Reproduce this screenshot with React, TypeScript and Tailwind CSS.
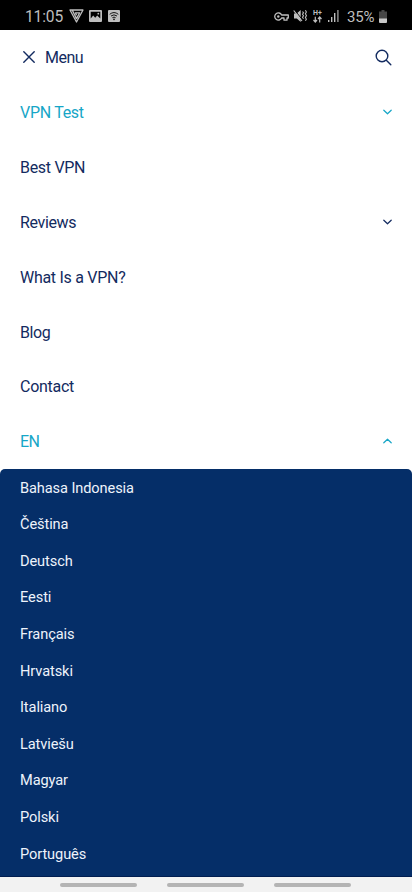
import React from "react";

const menu = [
  { label: "VPN Test", arrow: "down", active: true, tracking: "tracking-[-0.3px]" },
  { label: "Best VPN", tracking: "tracking-[-0.3px]" },
  { label: "Reviews", arrow: "down", tracking: "tracking-[-0.35px]" },
  { label: "What Is a VPN?", tracking: "tracking-[-0.28px]" },
  { label: "Blog", tracking: "tracking-[-0.4px]" },
  { label: "Contact", tracking: "tracking-[-0.28px]" },
  { label: "EN", arrow: "up", active: true, tracking: "tracking-[-0.5px]" },
];

const languages = [
  "Bahasa Indonesia", "Čeština", "Deutsch", "Eesti", "Français", "Hrvatski",
  "Italiano", "Latviešu", "Magyar", "Polski", "Português",
];

function Chevron({ up }: { up: boolean }) {
  return (
    <svg width="9" height="6" viewBox="0 0 9 6" fill="none" stroke="currentColor" strokeWidth="1.2" strokeLinecap="round" strokeLinejoin="round">
      <path d={up ? "M.8 4.8 4.5 1.2l3.7 3.6" : "M.8 1.2l3.7 3.6 3.7-3.6"} />
    </svg>
  );
}

function StatusBar() {
  return (
    <header className="flex h-[30px] shrink-0 items-center bg-black pt-[2px] text-[#bebebe]">
      <span className="ml-[25px] w-[38px] pt-px text-[15.6px] leading-5 tracking-[-0.15px] whitespace-nowrap">11:05</span>
      <svg className="ml-[6px] mb-px" width="15" height="14" viewBox="0 0 15 14" fill="none" stroke="currentColor" strokeWidth="1.3" strokeLinejoin="round">
        <path d="M3.2 1H1l6.5 12L14 1H3.2l4.3 8.6 3.2-5.8H6.4l1.2 2.5" />
      </svg>
      <svg className="ml-[5px]" width="13" height="12" viewBox="0 0 13 12">
        <path fill="currentColor" fillRule="evenodd" d="M1 0h11q1 0 1 1v10q0 1-1 1H1q-1 0-1-1V1q0-1 1-1Zm.7 1.7v6.8l2.5-3 2 2.3 2-2.2 3.1 3V1.7H1.7Z" />
        <circle cx="9.3" cy="3.7" r=".9" fill="currentColor" />
      </svg>
      <svg className="ml-[6px]" width="12" height="12" viewBox="0 0 12 12">
        <rect width="12" height="12" rx="1" fill="currentColor" />
        <g fill="none" stroke="#151515" strokeWidth="1">
          <path d="M1.7 4.3Q6 .8 10.3 4.3M3 6q3-2.3 6 0M4.4 7.7q1.6-1.2 3.2 0" />
        </g>
        <circle cx="6" cy="9.3" r=".9" fill="#151515" />
      </svg>

      <svg className="ml-auto" width="15" height="9" viewBox="0 0 15 9" fill="none" stroke="currentColor" strokeWidth="1.3" strokeLinejoin="round">
        <path d="M7.6 3A3.6 3.6 0 1 0 7.6 6H10v2.2h3V6h1.3V3Z" />
        <circle cx="4.3" cy="4.5" r="1.2" fill="currentColor" stroke="none" />
      </svg>
      <svg className="ml-[4px]" width="14" height="14" viewBox="0 0 14 14" fill="none" stroke="currentColor">
        <path fill="currentColor" stroke="none" d="M1 4.5h2.7L7.7 1v12L3.8 9.4H1z" />
        <path d="M1.5 1 10 11.5" stroke="#000" strokeWidth="1" />
        <path d="M.7 1.5 9 12" strokeWidth="1.2" />
        <path d="m9.5 2.5 1 1.3-1 1.5 1 1.5-1 1.5 1 1.5M12.4 1.3l1 1.7-1 1.8 1 1.8-1 1.8 1 1.8-1 1.6" strokeWidth="1.1" />
      </svg>
      <div className="ml-[6px] flex w-[9px] flex-col items-center">
        <span className="h-[6px] text-[7px] leading-[6px] font-bold whitespace-nowrap">H+</span>
        <svg width="9" height="7" viewBox="0 0 9 7" fill="none" stroke="currentColor" strokeWidth="1.2">
          <path d="M2.3.7v5M.5 4l1.8 2L4 4M6.7 6.4v-5M5 3l1.7-2 1.8 2" />
        </svg>
      </div>
      <svg className="ml-[6px]" width="11" height="12" viewBox="0 0 11 12" fill="currentColor">
        <path d="M0 10h1.4v2H0zM3 7h1.4v5H3zM6 3h1.4v9H6z" />
        <path d="M9.2 0h1.4v12H9.2z" fill="#969696" />
      </svg>
      <span className="ml-[8px] w-[28px] pt-px text-[15px] leading-5 tracking-[-0.15px] whitespace-nowrap">35%</span>
      <svg className="mr-[25px] ml-[4px]" width="8" height="13" viewBox="0 0 8 13">
        <path d="M2.5 0h3v1.5H8V9H0V1.5h2.5z" fill="#464646" />
        <path d="M0 8.5h8V12q0 1-1 1H1q-1 0-1-1z" fill="#c8c8c8" />
      </svg>
    </header>
  );
}

export default function App() {
  return (
    <div className="flex h-[892px] w-full flex-col overflow-hidden bg-white font-[Roboto,sans-serif] text-[#132b60]">
      <StatusBar />
      <div className="flex h-[54.6px] shrink-0 items-center pr-[20px] pl-[23px]">
        <svg width="12" height="12" viewBox="0 0 12 12" fill="none" stroke="currentColor" strokeWidth="1.4" strokeLinecap="round">
          <path d="m.8.8 10.4 10.4M11.2.8.8 11.2" />
        </svg>
        <span className="ml-[10px] pt-[2px] text-[16px] leading-5 tracking-[-0.5px]">Menu</span>
        <svg className="ml-auto" width="17" height="17" viewBox="0 0 17 17" fill="none" stroke="currentColor" strokeWidth="1.4" strokeLinecap="round">
          <circle cx="7" cy="7" r="5.8" />
          <path d="m11.3 11.3 4.5 4.4" />
        </svg>
      </div>
      <nav className="h-[384.8px] shrink-0">
        {menu.map((item) => (
          <div key={item.label} className={`flex h-[54.9px] items-center justify-between pr-[20px] pl-[20px] ${item.active ? "text-[#16a6c7]" : ""}`}>
            <span className={`pt-[2px] text-[16px] leading-5 ${item.tracking}`}>{item.label}</span>
            {item.arrow && <Chevron up={item.arrow === "up"} />}
          </div>
        ))}
      </nav>
      <div className="min-h-0 flex-1 overflow-hidden rounded-t-[5px] border-b border-[#001d50] bg-[#052e68] text-[#eef3fb]">
        {languages.map((language) => (
          <div key={language} className="flex h-[36.6px] items-center pl-[20px] text-[14.6px] leading-5 tracking-[-0.1px]">{language}</div>
        ))}
      </div>
      <footer className="flex h-[15px] shrink-0 items-center justify-center gap-[30px] bg-[#f2f2f2] pr-px">
        <div className="h-[4px] w-[77px] rounded-full bg-[#b4b4b4]" />
        <div className="h-[4px] w-[77px] rounded-full bg-[#b4b4b4]" />
        <div className="h-[4px] w-[77px] rounded-full bg-[#b4b4b4]" />
      </footer>
    </div>
  );
}
